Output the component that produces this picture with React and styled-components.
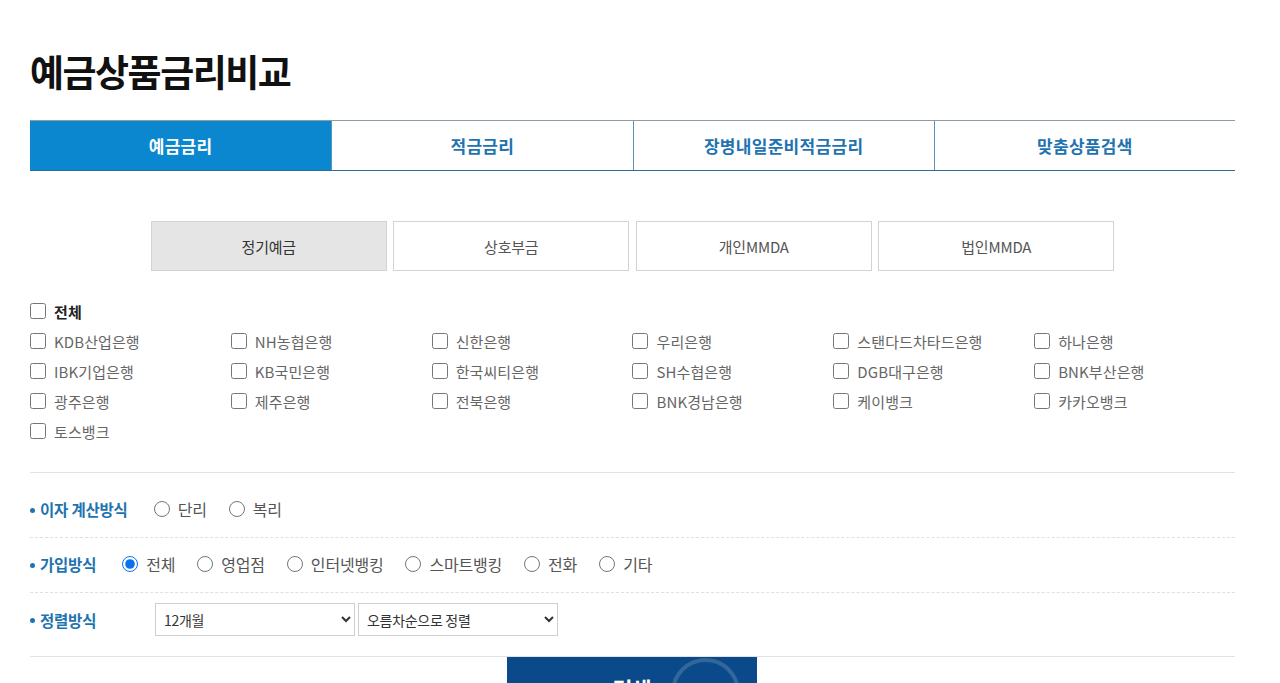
import React, { useState } from "react";
import styled, { createGlobalStyle } from "styled-components";

const Global = createGlobalStyle`
  html, body { margin: 0; padding: 0; background: #fff; }
  body { font-family: "Noto Sans CJK KR", "Noto Sans", sans-serif; color: #333; overflow: hidden; }
  * { box-sizing: border-box; }
`;

const Page = styled.div`
  width: 1205px;
  margin-left: 30px;
`;

const Title = styled.h1`
  margin: 51px 0 29px;
  font-size: 37px;
  line-height: 40px;
  font-weight: 700;
  letter-spacing: -1.5px;
  color: #111;
`;

const Tabs = styled.div`
  display: grid;
  grid-template-columns: repeat(4, 1fr);
  border-top: 2px solid #8d9ca7;
  border-bottom: 1px solid #2b6c9b;
  height: 51px;
`;

const Tab = styled.div`
  display: flex;
  align-items: center;
  justify-content: center;
  font-size: 17px;
  font-weight: 700;
  letter-spacing: 0.3px;
  color: ${(p) => (p.$active ? "#fff" : "#1f73b0")};
  background: ${(p) => (p.$active ? "#0a87cf" : "#fff")};
  border-left: ${(p) => (p.$first ? "none" : "1px solid #5d93bb")};
  margin-top: -1px;
`;

const SubTabs = styled.div`
  display: flex;
  justify-content: center;
  gap: 6.5px;
  margin-top: 50px;
`;

const SubTab = styled.div`
  width: 236px;
  height: 50px;
  display: flex;
  align-items: center;
  justify-content: center;
  border: 1px solid #d3d3d3;
  background: ${(p) => (p.$active ? "#e5e5e5" : "#fff")};
  color: ${(p) => (p.$active ? "#333" : "#555")};
  font-size: 15px;
  letter-spacing: -0.2px;
`;

const BankSection = styled.div`
  margin-top: 25px;
  padding-bottom: 26px;
  border-bottom: 1px solid #e2e2e2;
`;

const BankGrid = styled.div`
  display: grid;
  grid-template-columns: repeat(6, 1fr);
`;

const Check = styled.label`
  display: flex;
  align-items: center;
  gap: 8px;
  height: 30px;
  font-size: 15px;
  letter-spacing: 0.1px;
  color: ${(p) => (p.$bold ? "#222" : "#666")};
  font-weight: ${(p) => (p.$bold ? 700 : 400)};

  input {
    width: 16px;
    height: 16px;
    margin: 0;
    accent-color: #1a73e8;
  }
`;

const OptRow = styled.div`
  display: flex;
  align-items: center;
  padding: ${(p) => p.$pad};
  border-bottom: 1px ${(p) => (p.$solid ? "solid #e2e2e2" : "dashed #e0e0e0")};
`;

const Label = styled.div`
  font-size: 15.5px;
  font-weight: 700;
  letter-spacing: -0.2px;
  color: #1f73b0;
  line-height: 24px;
  width: ${(p) => (p.$width ? `${p.$width}px` : "auto")};
  margin-right: ${(p) => (p.$width ? 0 : 26)}px;
  display: flex;
  align-items: center;

  &::before {
    content: "";
    width: 5px;
    height: 5px;
    border-radius: 50%;
    background: #1f73b0;
    margin-right: 5px;
    margin-top: 2px;
  }
`;

const Options = styled.div`
  display: flex;
  align-items: center;
  gap: 22px;
`;

const Radio = styled.label`
  display: flex;
  align-items: center;
  gap: 8px;
  height: 24px;
  font-size: 16px;
  letter-spacing: -0.2px;
  color: #555;

  input {
    width: 16px;
    height: 16px;
    margin: 0;
    accent-color: #0b72ef;
  }
`;

const Selects = styled.div`
  display: flex;
  gap: 3px;
`;

const Select = styled.select`
  width: 200px;
  height: 33px;
  border: 1px solid #cfcfcf;
  border-radius: 0;
  background: #fff;
  font-family: "Noto Sans CJK KR", "Noto Sans", sans-serif;
  font-size: 14px;
  letter-spacing: -0.3px;
  color: #333;
  padding: 0 4px;
  outline: none;
`;

const ButtonWrap = styled.div`
  display: flex;
  justify-content: center;
`;

const SearchButton = styled.button`
  position: relative;
  overflow: hidden;
  width: 250px;
  height: 60px;
  margin-left: -2px;
  border: none;
  background: #0b4a8a;
  color: #fff;
  font-family: "Noto Sans CJK KR", "Noto Sans", sans-serif;
  font-size: 22px;
  font-weight: 700;
  letter-spacing: -1px;
  padding: 0;
  padding-top: 2px;
`;

const Ring = styled.span`
  position: absolute;
  left: 164px;
  top: 1px;
  width: 69px;
  height: 69px;
  border-radius: 50%;
  border: 4px solid rgba(255, 255, 255, 0.16);
`;

const tabs = ["예금금리", "적금금리", "장병내일준비적금금리", "맞춤상품검색"];
const subTabs = ["정기예금", "상호부금", "개인MMDA", "법인MMDA"];
const banks = [
  "KDB산업은행", "NH농협은행", "신한은행", "우리은행", "스탠다드차타드은행", "하나은행",
  "IBK기업은행", "KB국민은행", "한국씨티은행", "SH수협은행", "DGB대구은행", "BNK부산은행",
  "광주은행", "제주은행", "전북은행", "BNK경남은행", "케이뱅크", "카카오뱅크",
  "토스뱅크",
];
const joinWays = ["전체", "영업점", "인터넷뱅킹", "스마트뱅킹", "전화", "기타"];

export default function App() {
  const [join, setJoin] = useState("전체");
  const [calc, setCalc] = useState(null);
  return (
    <Page>
      <Global />
      <Title>예금상품금리비교</Title>
      <Tabs>
        {tabs.map((t, i) => (
          <Tab key={t} $active={i === 0} $first={i === 0}>{t}</Tab>
        ))}
      </Tabs>
      <SubTabs>
        {subTabs.map((t, i) => (
          <SubTab key={t} $active={i === 0}>{t}</SubTab>
        ))}
      </SubTabs>
      <BankSection>
        <Check $bold>
          <input type="checkbox" />
          전체
        </Check>
        <BankGrid>
          {banks.map((b) => (
            <Check key={b}>
              <input type="checkbox" />
              {b}
            </Check>
          ))}
        </BankGrid>
      </BankSection>
      <OptRow $pad="24px 0 16px">
        <Label>이자 계산방식</Label>
        <Options>
          {["단리", "복리"].map((c) => (
            <Radio key={c}>
              <input type="radio" name="calc" checked={calc === c} onChange={() => setCalc(c)} />
              {c}
            </Radio>
          ))}
        </Options>
      </OptRow>
      <OptRow $pad="14px 0 16px">
        <Label>가입방식</Label>
        <Options>
          {joinWays.map((w) => (
            <Radio key={w}>
              <input type="radio" name="join" checked={join === w} onChange={() => setJoin(w)} />
              {w}
            </Radio>
          ))}
        </Options>
      </OptRow>
      <OptRow $pad="10px 0 20px" $solid>
        <Label $width={125}>정렬방식</Label>
        <Selects>
          <Select defaultValue="12">
            <option value="6">6개월</option>
            <option value="12">12개월</option>
            <option value="24">24개월</option>
            <option value="36">36개월</option>
          </Select>
          <Select defaultValue="asc">
            <option value="asc">오름차순으로 정렬</option>
            <option value="desc">내림차순으로 정렬</option>
          </Select>
        </Selects>
      </OptRow>
      <ButtonWrap>
        <SearchButton>
          <Ring />
          검색
        </SearchButton>
      </ButtonWrap>
    </Page>
  );
}
